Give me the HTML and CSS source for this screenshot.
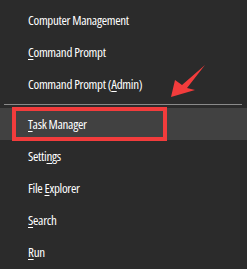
FILE: index.html
```html
<!DOCTYPE html>
<html lang="en">
<head>
    <meta charset="UTF-8">
    <title>Win+X Menu</title>
    <link rel="stylesheet" href="styles.css">
</head>
<body>

<ul class="menu">
    <li>Computer Mana<u>g</u>ement</li>
    <li><u>C</u>ommand Prompt</li>
    <li>Command Prompt (<u>A</u>dmin)</li>
    <li class="separator"></li>
    <li class="active"><u>T</u>ask Manager<span class="mark"></span></li>
    <li>Setti<u>n</u>gs</li>
    <li>File <u>E</u>xplorer</li>
    <li><u>S</u>earch</li>
    <li><u>R</u>un</li>
</ul>

<svg class="arrow" width="247" height="269" viewBox="0 0 247 269">
    <polygon points="171,97 175,80 182,85 205,65 187,88 195,90" fill="#f23c3c"/>
</svg>

</body>
</html>
```
FILE: styles.css
```css
body {
    margin: 0;
    background-color: #2b2b2b;
    font-family: "Open Sans", sans-serif;
    color: #ffffff;
}
.menu {
    list-style: none;
    margin: 0;
    padding: 4px 0 0 0;
}
.menu li {
    position: relative;
    height: 32px;
    line-height: 32px;
    padding-left: 28px;
    font-size: 13px;
    font-stretch: 87.5%;
    letter-spacing: -0.3px;
}
.menu u {
    text-decoration-thickness: 1px;
    text-underline-offset: 2px;
}
.menu li.separator {
    height: 1px;
    margin: 4px 5px 3px 4px;
    padding: 0;
    background-color: #8a8a8a;
}
.menu li.active {
    background-color: #414141;
}
.mark {
    position: absolute;
    left: 12px;
    top: -1px;
    width: 147px;
    height: 26px;
    border: 4px solid #f23c3c;
}
.arrow {
    position: absolute;
    left: 0;
    top: 0;
}
```
